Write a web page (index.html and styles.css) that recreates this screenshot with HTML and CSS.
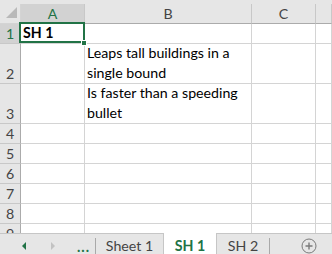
FILE: index.html
```html
<!DOCTYPE html>
<html lang="en">
<head>
  <meta charset="UTF-8">
  <title>Sheet</title>
  <link rel="stylesheet" href="styles.css">
</head>
<body>

  <div class="sheet">
    <div class="top-strip"></div>

    <div class="grid-wrap">
      <div class="grid">
        <!-- column headers -->
        <div class="hd corner">
          <svg width="11" height="11" viewBox="0 0 11 11"><polygon points="11,0 11,11 0,11" fill="#b9b9b9"/></svg>
        </div>
        <div class="hd col sel">A</div>
        <div class="hd col">B</div>
        <div class="hd col">C</div>
        <div class="hd col"></div>

        <!-- row 1 -->
        <div class="hd row sel">1</div>
        <div class="cell active"><b>SH 1</b><span class="handle"></span></div>
        <div class="cell"></div>
        <div class="cell"></div>
        <div class="cell"></div>

        <!-- row 2 -->
        <div class="hd row">2</div>
        <div class="cell"></div>
        <div class="cell wrap">Leaps tall buildings in a single bound</div>
        <div class="cell"></div>
        <div class="cell"></div>

        <!-- row 3 -->
        <div class="hd row">3</div>
        <div class="cell"></div>
        <div class="cell wrap">Is faster than a speeding bullet</div>
        <div class="cell"></div>
        <div class="cell"></div>

        <div class="hd row">4</div><div class="cell"></div><div class="cell"></div><div class="cell"></div><div class="cell"></div>
        <div class="hd row">5</div><div class="cell"></div><div class="cell"></div><div class="cell"></div><div class="cell"></div>
        <div class="hd row">6</div><div class="cell"></div><div class="cell"></div><div class="cell"></div><div class="cell"></div>
        <div class="hd row">7</div><div class="cell"></div><div class="cell"></div><div class="cell"></div><div class="cell"></div>
        <div class="hd row">8</div><div class="cell"></div><div class="cell"></div><div class="cell"></div><div class="cell"></div>
        <div class="hd row">9</div><div class="cell"></div><div class="cell"></div><div class="cell"></div><div class="cell"></div>
      </div>
    </div>

    <div class="tabbar">
      <div class="nav">
        <svg class="arrow" width="5" height="8" viewBox="0 0 5 8"><polygon points="4,0 4,8 0,4" fill="#217346"/></svg>
        <svg class="arrow off" width="5" height="8" viewBox="0 0 5 8"><polygon points="0,0 0,8 4,4" fill="#c2c2c2"/></svg>
        <span class="dots">...</span>
      </div>
      <div class="tab first">Sheet 1</div>
      <div class="tab current">SH 1</div>
      <div class="tab last">SH 2</div>
      <div class="add">
        <svg width="16" height="16" viewBox="0 0 16 16">
          <circle cx="8" cy="8" r="7" fill="none" stroke="#7a7a7a" stroke-width="1"/>
          <path d="M8 4.5v7M4.5 8h7" stroke="#7a7a7a" stroke-width="1.4"/>
        </svg>
      </div>
    </div>
  </div>

</body>
</html>
```

FILE: styles.css
```css
body {
  margin: 0;
  font-family: Lato, "Liberation Sans", sans-serif;
  font-size: 14.2px;
  color: #000;
  overflow: hidden;
}

.sheet {
  width: 332px;
  height: 254px;
  display: flex;
  flex-direction: column;
  background: #fff;
}

.top-strip {
  height: 4px;
  background: #e6e6e6;
}

.grid-wrap {
  height: 229px;
  overflow: hidden;
}

.grid {
  display: grid;
  grid-template-columns: 21px 64px 167px 64px 1fr;
  grid-template-rows: 20px 20px 40px 40px repeat(6, 20px);
}

.grid > div {
  box-sizing: border-box;
  border-right: 1px solid #d4d4d4;
  border-bottom: 1px solid #d4d4d4;
}

.hd {
  background: #e6e6e6;
  color: #444;
  display: flex;
  justify-content: center;
  align-items: flex-end;
  line-height: 19px;
}

.grid > .hd.col {
  border-right-color: #c8c8c8;
  border-bottom-color: #ababab;
}

.grid > .hd.row {
  border-right-color: #ababab;
  border-bottom-color: #c8c8c8;
}

.hd.sel {
  background: #d2d2d2;
  color: #217346;
}

.corner {
  align-items: flex-end;
  justify-content: flex-end;
  padding: 0 3px 5px 0;
}

.corner svg {
  display: block;
}

.cell {
  display: flex;
  align-items: flex-end;
  padding: 0 2px;
  line-height: 20px;
  white-space: nowrap;
}

.cell.wrap {
  white-space: normal;
  line-height: 20px;
}

.cell.active {
  position: relative;
}

.cell.active::after {
  content: "";
  position: absolute;
  top: -2px;
  left: -2px;
  right: -1px;
  bottom: 0;
  border: 2px solid #217346;
}

.handle {
  position: absolute;
  right: -3px;
  bottom: -3px;
  width: 6px;
  height: 6px;
  box-sizing: border-box;
  background: #217346;
  border: 1px solid #fff;
  z-index: 1;
}

.tabbar {
  flex: 1;
  display: flex;
  background: #e6e6e6;
  border-top: 1px solid #c6c6c6;
  color: #444;
}

.nav {
  width: 96px;
  display: flex;
  align-items: center;
  padding-top: 3px;
  box-sizing: border-box;
}

.arrow {
  display: block;
  margin-left: 22px;
}

.arrow.off {
  margin-left: 24px;
}

.dots {
  margin-left: 21px;
  color: #217346;
  font-weight: bold;
  letter-spacing: 1px;
  align-self: flex-end;
  line-height: 14px;
}

.tab {
  box-sizing: border-box;
  display: flex;
  align-items: center;
  justify-content: center;
  padding-top: 3px;
  position: relative;
}

.tab.first {
  width: 68px;
  border-right: 1px solid #c6c6c6;
}

.tab.first::before,
.tab.last::after {
  content: "";
  position: absolute;
  top: 4px;
  bottom: 0;
  width: 1px;
  background: #a9a9a9;
}

.tab.first::before {
  left: -1px;
}

.tab.current {
  width: 52px;
  margin-top: -1px;
  background: #fff;
  color: #217346;
  font-weight: bold;
}

.tab.last {
  width: 53px;
  border-left: 1px solid #c6c6c6;
}

.tab.last::after {
  right: -1px;
}

.add {
  flex: 1;
  display: flex;
  justify-content: center;
  align-items: center;
  padding-top: 3px;
  padding-left: 17px;
}

.add svg {
  display: block;
}
```
